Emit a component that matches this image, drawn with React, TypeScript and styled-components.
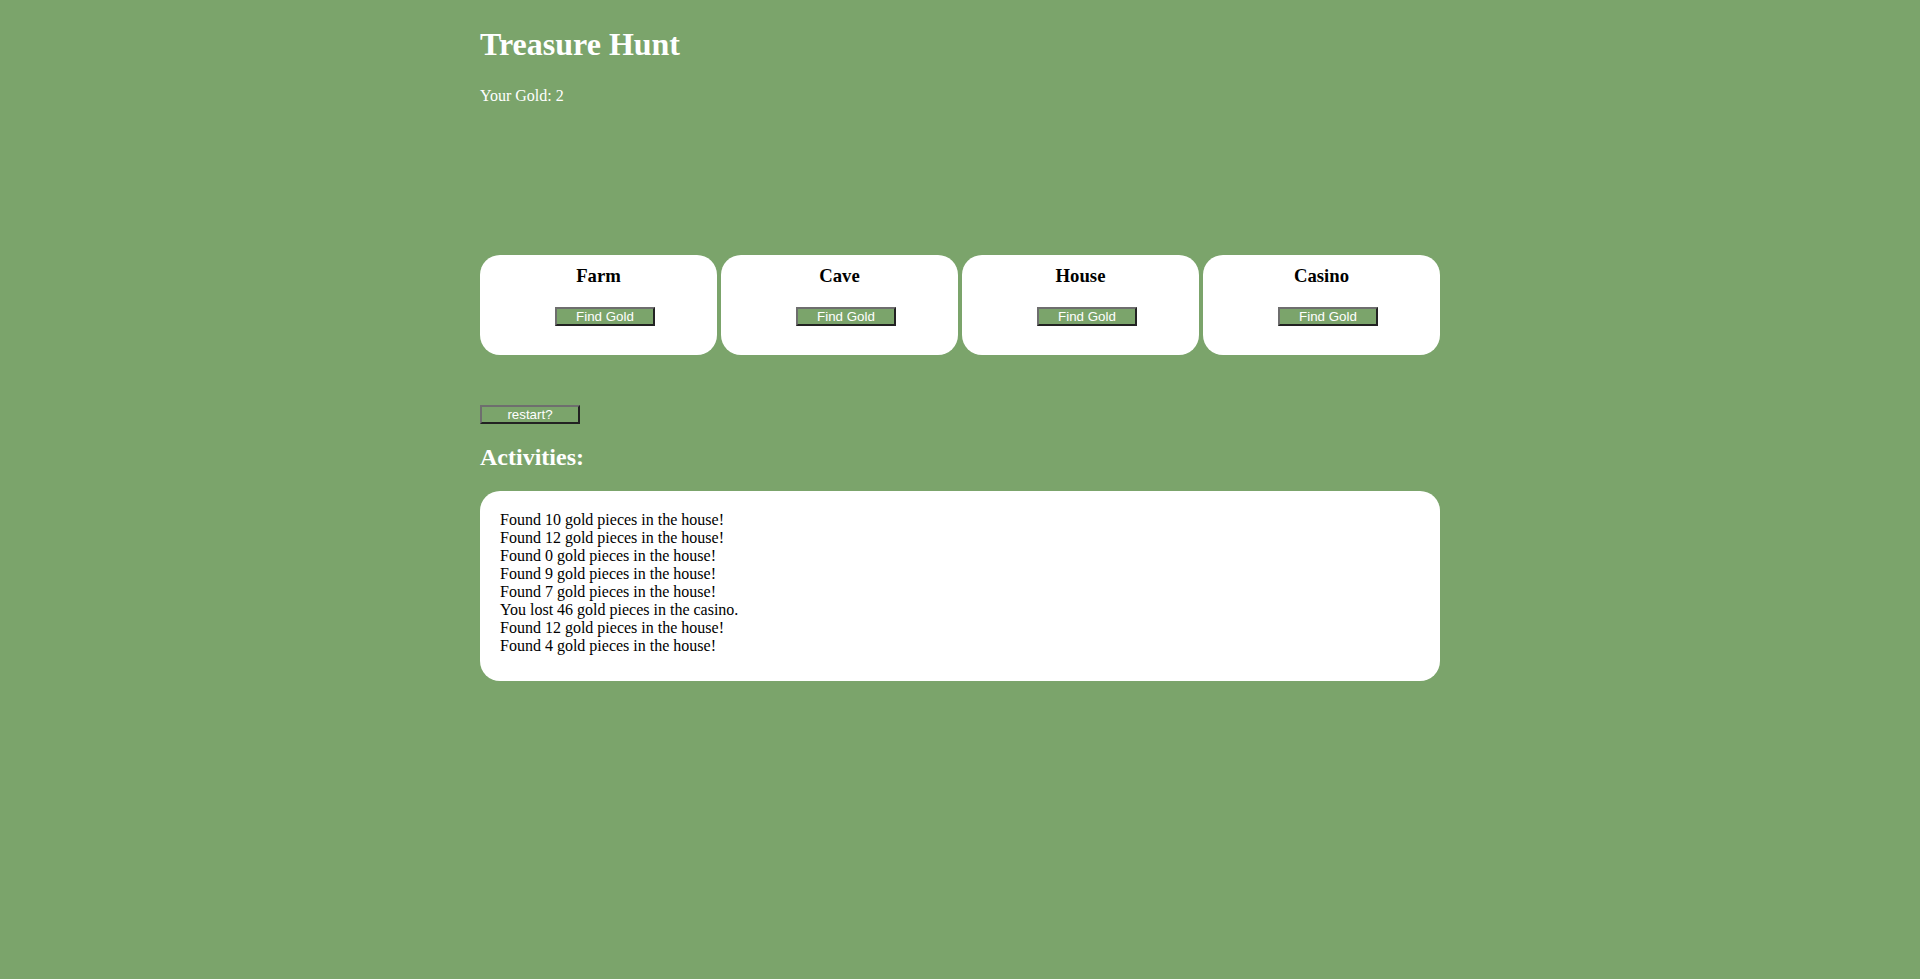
import React from 'react'
import styled, { createGlobalStyle } from 'styled-components'

const GlobalStyle = createGlobalStyle`
  html, body {
    margin: 0;
    padding: 0;
    background: #7ba46b;
  }
  body {
    font-family: "Liberation Serif", "Times New Roman", serif;
  }
`

const Page = styled.div`
  min-height: 100vh;
  background: #7ba46b;
  color: #fff;
`

const Column = styled.div`
  width: 960px;
  margin: 0 auto;
  padding-top: 26px;
  display: flex;
  flex-direction: column;
  align-items: flex-start;
`

const Title = styled.h1`
  margin: 0;
  font-size: 32px;
  line-height: 37px;
  font-weight: bold;
`

const Gold = styled.p`
  margin: 24px 0 0;
  font-size: 16px;
  line-height: 18px;
`

const Locations = styled.div`
  margin-top: 150px;
  width: 100%;
  display: grid;
  grid-template-columns: repeat(4, 1fr);
  gap: 4px;
`

const Card = styled.div`
  background: #fff;
  color: #000;
  border-radius: 20px;
  padding: 10px 0 29px;
  display: flex;
  flex-direction: column;
  align-items: center;
`

const CardTitle = styled.h3`
  margin: 0;
  font-size: 18.72px;
  line-height: 22px;
  font-weight: bold;
`

const GameButton = styled.button<{ $offset?: number }>`
  width: 100px;
  height: 19px;
  padding: 0;
  margin-left: ${(p) => p.$offset ?? 0}px;
  background: #7ba46b;
  color: #fff;
  font-family: "Liberation Sans", Arial, sans-serif;
  font-size: 13.33px;
  line-height: 15px;
  border-style: solid;
  border-width: 2px;
  border-color: #6e6e6e #222 #222 #6e6e6e;
  cursor: pointer;
`

const FindButton = styled(GameButton)`
  margin-top: 20px;
`

const RestartButton = styled(GameButton)`
  margin-top: 50px;
`

const Heading = styled.h2`
  margin: 19px 0 0;
  font-size: 24px;
  line-height: 28px;
  font-weight: bold;
`

const Log = styled.div`
  margin-top: 20px;
  width: 100%;
  box-sizing: border-box;
  background: #fff;
  color: #000;
  border-radius: 20px;
  padding: 20px 20px 26px;
  font-size: 16px;
  line-height: 18px;
`

const Entry = styled.div``

const places = ['Farm', 'Cave', 'House', 'Casino']

const activities = [
  'Found 10 gold pieces in the house!',
  'Found 12 gold pieces in the house!',
  'Found 0 gold pieces in the house!',
  'Found 9 gold pieces in the house!',
  'Found 7 gold pieces in the house!',
  'You lost 46 gold pieces in the casino.',
  'Found 12 gold pieces in the house!',
  'Found 4 gold pieces in the house!',
]

export default function App() {
  return (
    <Page>
      <GlobalStyle />
      <Column>
        <Title>Treasure Hunt</Title>
        <Gold>Your Gold: 2</Gold>
        <Locations>
          {places.map((place) => (
            <Card key={place}>
              <CardTitle>{place}</CardTitle>
              <FindButton $offset={13}>Find Gold</FindButton>
            </Card>
          ))}
        </Locations>
        <RestartButton>restart?</RestartButton>
        <Heading>Activities:</Heading>
        <Log>
          {activities.map((a, i) => (
            <Entry key={i}>{a}</Entry>
          ))}
        </Log>
      </Column>
    </Page>
  )
}
